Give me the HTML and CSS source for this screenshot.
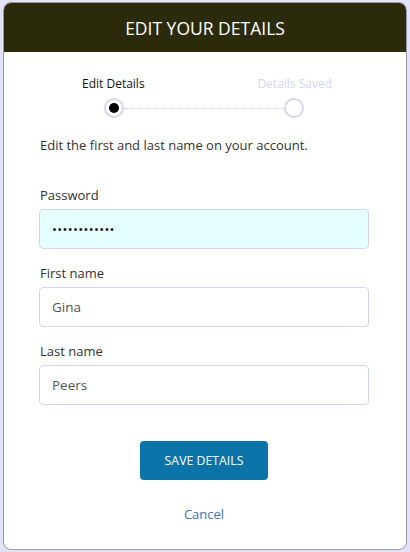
FILE: index.html
```html
<!DOCTYPE html>
<html>
<head>
<meta charset="utf-8">
<link rel="stylesheet" href="styles.css">
</head>
<body>
<div class="card">
  <div class="header">EDIT YOUR DETAILS</div>
  <div class="body">
    <div class="stepper">
      <div class="step-labels">
        <span class="step-label active">Edit Details</span>
        <span class="step-label done">Details Saved</span>
      </div>
      <div class="track">
        <span class="dot current"></span>
        <span class="line"></span>
        <span class="dot"></span>
      </div>
    </div>
    <p class="intro">Edit the first and last name on your account.</p>
    <div class="field first">
      <label class="label">Password</label>
      <div class="input filled">••••••••••••</div>
    </div>
    <div class="field">
      <label class="label">First name</label>
      <div class="input">Gina</div>
    </div>
    <div class="field">
      <label class="label">Last name</label>
      <div class="input">Peers</div>
    </div>
    <div class="actions">
      <button class="btn">SAVE DETAILS</button>
      <a class="cancel">Cancel</a>
    </div>
  </div>
</div>
</body>
</html>
```
FILE: styles.css
```css
html, body {
  margin: 0;
  padding: 0;
}
body {
  background: #e2e2f8;
  font-family: "Open Sans", "Noto Sans", sans-serif;
  color: #333;
  padding: 2px 3px 2px 3px;
  height: 552px;
  box-sizing: border-box;
}
.card {
  height: 548px;
  box-sizing: border-box;
  background: #fff;
  border: 1px solid #9a9aa6;
  border-radius: 8px;
  overflow: hidden;
  display: flex;
  flex-direction: column;
}
.header {
  height: 49px;
  background: #2b2a0b;
  color: #fff;
  font-size: 17.5px;
  display: flex;
  align-items: center;
  justify-content: center;
  flex-shrink: 0;
}
.body {
  padding: 0 37px 0 35px;
  display: flex;
  flex-direction: column;
}
.stepper {
  padding-top: 24px;
  display: flex;
  flex-direction: column;
  align-items: center;
}
.step-labels {
  width: 250px;
  margin-left: 6px;
  display: flex;
  justify-content: space-between;
  font-size: 12px;
  line-height: 16px;
}
.step-label.active { color: #111; }
.step-label.done { color: #d6d6f2; }
.track {
  margin-top: 6px;
  width: 200px;
  display: flex;
  align-items: center;
}
.dot {
  width: 16px;
  height: 16px;
  border: 2px solid #d6d6f4;
  border-radius: 50%;
  background: #fff;
  flex-shrink: 0;
  position: relative;
}
.dot.current::after {
  content: "";
  position: absolute;
  left: 3px;
  top: 3px;
  width: 10px;
  height: 10px;
  border-radius: 50%;
  background: #000;
}
.line {
  flex: 1;
  border-top: 1px dotted #c8c8e6;
  height: 0;
}
.intro {
  margin: 18px 0 0 1px;
  font-size: 13px;
  line-height: 18px;
  color: #333;
}
.field {
  display: flex;
  flex-direction: column;
  margin-top: 15px;
}
.field.first { margin-top: 32px; }
.label {
  font-size: 13px;
  line-height: 18px;
  color: #333;
  margin-left: 1px;
}
.input {
  margin-top: 5px;
  height: 40px;
  box-sizing: border-box;
  border: 1px solid #d4d4f0;
  border-radius: 4px;
  padding: 0 12px;
  display: flex;
  align-items: center;
  font-size: 13.5px;
  color: #555;
  background: #fff;
}
.input.filled {
  background: #e6ffff;
  color: #111;
  font-size: 13px;
  letter-spacing: 0.35px;
}
.actions {
  display: flex;
  flex-direction: column;
  align-items: center;
  margin-top: 36px;
}
.btn {
  width: 128px;
  height: 39px;
  background: #0a74a8;
  color: #fff;
  border: none;
  border-radius: 4px;
  font-family: inherit;
  font-size: 12.3px;
}
.cancel {
  margin-top: 25px;
  font-size: 13px;
  line-height: 18px;
  color: #3a72c4;
}
```
